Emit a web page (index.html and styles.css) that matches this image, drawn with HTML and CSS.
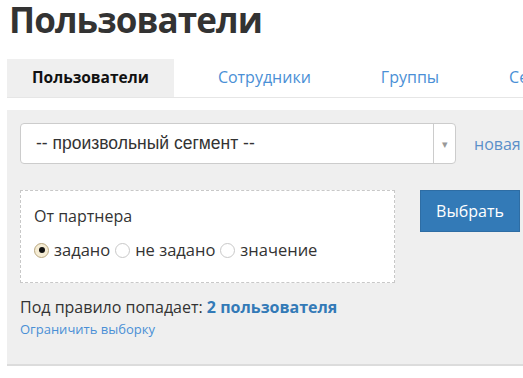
FILE: index.html
```html
<!DOCTYPE html>
<html lang="ru">
<head>
    <meta charset="UTF-8">
    <title>Пользователи</title>
    <link rel="stylesheet" href="styles.css">
</head>
<body>
    <h1 class="page-title">Пользователи</h1>

    <ul class="tabs">
        <li class="tab active"><a href="#">Пользователи</a></li>
        <li class="tab"><a href="#">Сотрудники</a></li>
        <li class="tab"><a href="#">Группы</a></li>
        <li class="tab"><a href="#">Сегменты</a></li>
    </ul>

    <div class="filter-panel">
        <div class="segment-row">
            <div class="segment-select">
                <span class="segment-value">-- произвольный сегмент --</span>
                <span class="segment-arrow">▾</span>
            </div>
            <a href="#" class="new-link">новая</a>
        </div>

        <div class="rule-row">
            <div class="rule-box">
                <div class="rule-title">От партнера</div>
                <div class="rule-options">
                    <label class="radio"><span class="radio-dot checked"></span>задано</label>
                    <label class="radio"><span class="radio-dot"></span>не задано</label>
                    <label class="radio"><span class="radio-dot"></span>значение</label>
                </div>
            </div>
            <button class="select-btn">Выбрать</button>
        </div>

        <div class="result">Под правило попадает: <a href="#" class="result-count">2 пользователя</a></div>
        <a href="#" class="limit-link">Ограничить выборку</a>
    </div>
</body>
</html>
```

FILE: styles.css
```css
* {
    margin: 0;
    padding: 0;
    box-sizing: border-box;
}

body {
    font-family: 'Open Sans', sans-serif;
    color: #333;
    background: #fff;
    padding-left: 7px;
    overflow: hidden;
}

.page-title {
    font-size: 35px;
    font-weight: 700;
    color: #333;
    line-height: 40px;
    padding-left: 2px;
    margin-bottom: 19px;
    letter-spacing: -0.9px;
}

.tabs {
    display: flex;
    list-style: none;
    border-bottom: 1px solid #e6e6e6;
    height: 39px;
    width: 600px;
    margin-bottom: 12px;
}

.tab {
    margin-right: 18px;
}

.tab a {
    display: block;
    height: 38px;
    line-height: 37px;
    padding: 0 26px;
    font-size: 16px;
    color: #4a8fd6;
    text-decoration: none;
    white-space: nowrap;
}

.tab.active a {
    background: #efefef;
    color: #111;
    font-weight: 700;
    font-size: 15.5px;
    padding: 0 25px;
}

.filter-panel {
    background: #efefef;
    border-bottom: 2px solid #dcdcdc;
    width: 600px;
    height: 256px;
    padding: 13px 13px 0;
}

.segment-row {
    display: flex;
    align-items: center;
    gap: 18px;
}

.segment-select {
    display: flex;
    width: 436px;
    height: 41px;
    background: #fff;
    border: 1px solid #ccc;
    border-radius: 4px;
}

.segment-value {
    flex: 1;
    padding-left: 15px;
    line-height: 39px;
    font-family: 'Liberation Sans', Arial, sans-serif;
    font-size: 17.5px;
    color: #333;
}

.segment-arrow {
    width: 22px;
    border-left: 1px solid #ccc;
    text-align: center;
    line-height: 39px;
    font-size: 11px;
    color: #999;
}

.new-link {
    font-size: 16px;
    color: #5b8fc9;
    text-decoration: none;
}

.rule-row {
    display: flex;
    align-items: flex-start;
    gap: 25px;
    margin-top: 26px;
}

.rule-box {
    width: 375px;
    height: 93px;
    background: #fff;
    border: 1px dashed #c8c8c8;
    padding: 14px 13px 0;
}

.rule-title {
    font-size: 16px;
    color: #333;
    line-height: 22px;
    margin-bottom: 12px;
}

.rule-options {
    display: flex;
    gap: 5px;
    font-size: 16.5px;
    line-height: 22px;
}

.radio {
    display: flex;
    align-items: center;
    gap: 5px;
}

.radio-dot {
    width: 15px;
    height: 15px;
    border-radius: 50%;
    border: 1px solid #c8c8c8;
    background: #fff;
    position: relative;
}

.radio-dot.checked {
    border-color: #b9a77f;
    background: #f5ecd4;
}

.radio-dot.checked::after {
    content: '';
    position: absolute;
    left: 3.5px;
    top: 3.5px;
    width: 6px;
    height: 6px;
    border-radius: 50%;
    background: #111;
}

.select-btn {
    width: 100px;
    height: 42px;
    background: #337ab7;
    border: 1px solid #2e6da4;
    color: #fff;
    font-family: 'Open Sans', sans-serif;
    font-size: 16px;
    cursor: pointer;
}

.result {
    margin-top: 13px;
    font-size: 16px;
    color: #333;
    line-height: 22px;
}

.result-count {
    color: #337ab7;
    font-weight: 700;
    text-decoration: none;
}

.limit-link {
    display: block;
    font-size: 13px;
    color: #4a8fd6;
    text-decoration: none;
    line-height: 22px;
}
```
